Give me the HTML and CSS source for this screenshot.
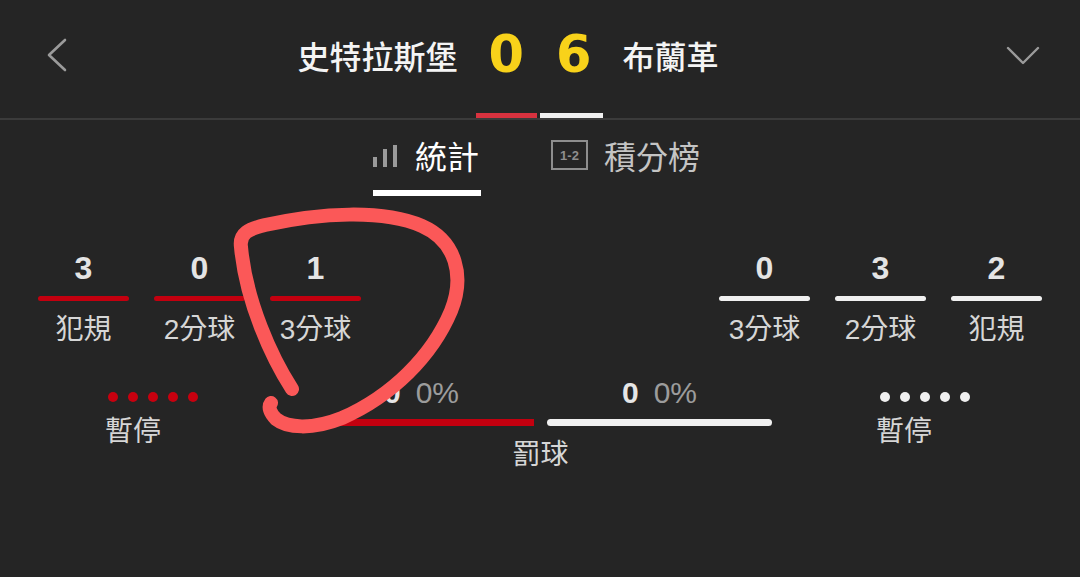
FILE: index.html
```html
<!DOCTYPE html>
<html lang="zh-Hant">
<head>
    <meta charset="UTF-8">
    <meta name="viewport" content="width=device-width, initial-scale=1.0">
    <title>史特拉斯堡 vs 布蘭革</title>
    <link rel="stylesheet" href="styles.css">
</head>
<body>
    <header>
        <div class="topbar">
            <div class="side side-left">
                <svg class="chevron" width="22" height="34" viewBox="0 0 22 34"><polyline points="19,2 3,17 19,32" fill="none" stroke="#9b9b9b" stroke-width="2.6" stroke-linecap="round" stroke-linejoin="round"/></svg>
            </div>
            <div class="match">
                <span class="team team-home">史特拉斯堡</span>
                <span class="scores"><span class="score">0</span><span class="score">6</span></span>
                <span class="team team-away">布蘭革</span>
            </div>
            <div class="side side-right">
                <svg class="chevron" width="34" height="20" viewBox="0 0 34 20"><polyline points="2,3 17,18 32,3" fill="none" stroke="#9b9b9b" stroke-width="2.4" stroke-linecap="round" stroke-linejoin="round"/></svg>
            </div>
        </div>
        <div class="pager">
            <span class="pager-home"></span>
            <span class="pager-away"></span>
        </div>
    </header>

    <nav class="tabs">
        <div class="tab active">
            <div class="tab-row">
                <svg width="26" height="24" viewBox="0 0 26 24"><rect x="0" y="14" width="4" height="10" fill="#9a9a9a"/><rect x="10" y="6" width="4" height="18" fill="#9a9a9a"/><rect x="20" y="2" width="4" height="22" fill="#9a9a9a"/></svg>
                <span>統計</span>
            </div>
            <div class="tab-line"></div>
        </div>
        <div class="tab">
            <div class="tab-row">
                <span class="box-icon">1-2</span>
                <span>積分榜</span>
            </div>
        </div>
    </nav>

    <section class="stats">
        <div class="stat-group">
            <div class="stat home"><b>3</b><i></i><span>犯規</span></div>
            <div class="stat home"><b>0</b><i></i><span>2分球</span></div>
            <div class="stat home"><b>1</b><i></i><span>3分球</span></div>
        </div>
        <div class="stat-group">
            <div class="stat away"><b>0</b><i></i><span>3分球</span></div>
            <div class="stat away"><b>3</b><i></i><span>2分球</span></div>
            <div class="stat away"><b>2</b><i></i><span>犯規</span></div>
        </div>
    </section>

    <section class="bottom">
        <div class="timeout home">
            <div class="dots"><i></i><i></i><i></i><i></i><i></i></div>
            <span>暫停</span>
        </div>
        <div class="freethrow">
            <div class="ft-sides">
                <div class="ft-side home">
                    <div class="ft-num"><b>0</b><em>0%</em></div>
                    <i></i>
                </div>
                <div class="ft-side away">
                    <div class="ft-num"><b>0</b><em>0%</em></div>
                    <i></i>
                </div>
            </div>
            <span>罰球</span>
        </div>
        <div class="timeout away">
            <div class="dots"><i></i><i></i><i></i><i></i><i></i></div>
            <span>暫停</span>
        </div>
    </section>

    <!-- hand drawn mark on top of the screen -->
    <svg class="scribble" width="1080" height="577" viewBox="0 0 1080 577">
        <path d="M292 389 C272 358 246 302 241 247 C239 233 249 229 265 225 C320 213 382 209 422 226 C456 241 465 276 451 311 C432 356 392 396 342 418 C312 430 287 428 276 419 C270 413 268 407 271 403" fill="none" stroke="#fb5858" stroke-width="14" stroke-linecap="round" stroke-linejoin="round"/>
    </svg>
</body>
</html>
```

FILE: styles.css
```css
body {
    margin: 0;
    width: 1080px;
    height: 577px;
    overflow: hidden;
    background: #252525;
    color: #e6e6e6;
    font-family: "Liberation Sans", "Noto Sans CJK TC", sans-serif;
    position: relative;
}
header {
    border-bottom: 2px solid #3b3b3b;
}
.topbar {
    display: flex;
    align-items: center;
    height: 113px;
    padding-bottom: 4px;
    box-sizing: border-box;
}
.side {
    width: 100px;
    display: flex;
}
.side-left { padding-left: 46px; box-sizing: border-box; }
.side-right { justify-content: flex-end; padding-right: 40px; box-sizing: border-box; }
.match {
    flex: 1;
    display: grid;
    grid-template-columns: 1fr auto 1fr;
    column-gap: 31px;
    align-items: center;
}
.team {
    font-family: "Noto Sans CJK TC", sans-serif;
    font-size: 32px;
    font-weight: 500;
    color: #f4f4f4;
}
.team-home { text-align: right; }
.scores {
    display: flex;
    gap: 32px;
}
.score {
    font-family: "DejaVu Sans", sans-serif;
    font-weight: bold;
    font-size: 51px;
    line-height: 56px;
    color: #f8d21a;
}
.pager {
    display: flex;
    justify-content: center;
    gap: 3px;
    height: 5px;
    margin-left: -2px;
}
.pager-home { width: 61px; background: #d8323f; }
.pager-away { width: 63px; background: #f0f0f0; }

.tabs {
    display: flex;
    gap: 69px;
    padding: 15px 0 0 373px;
    height: 61px;
}
.tab {
    display: flex;
    flex-direction: column;
}
.tab-row {
    display: flex;
    align-items: center;
    gap: 16px;
    height: 40px;
    font-family: "Noto Sans CJK TC", sans-serif;
    font-size: 32px;
    color: #c4c4c4;
}
.tab.active .tab-row { color: #ffffff; }
.tab-line {
    margin-top: 15px;
    width: 108px;
    height: 6px;
    background: #ffffff;
}
.box-icon {
    width: 37px;
    height: 30px;
    margin-left: 1px;
    border: 2px solid #8e8e8e;
    box-sizing: border-box;
    display: flex;
    align-items: center;
    justify-content: center;
    font-family: "Liberation Sans", sans-serif;
    font-size: 13px;
    font-weight: bold;
    color: #8e8e8e;
}

.stats {
    display: flex;
    justify-content: space-between;
    padding: 0 38px;
    margin-top: 54px;
}
.stat-group {
    display: flex;
    gap: 25px;
}
.stat {
    width: 91px;
    display: flex;
    flex-direction: column;
    align-items: center;
}
.stat b {
    font-size: 32px;
    line-height: 36px;
    color: #e4e4e4;
}
.stat i {
    width: 100%;
    height: 5px;
    border-radius: 3px;
    margin-top: 10px;
}
.stat.home i { background: #c3000f; }
.stat.away i { background: #f0f0f0; }
.stat span {
    margin-top: 11px;
    font-size: 28px;
    line-height: 36px;
    color: #d6d6d6;
}

.bottom {
    display: flex;
    align-items: flex-start;
    padding-left: 105px;
    margin-top: 28px;
}
.timeout {
    display: flex;
    flex-direction: column;
    font-family: "Noto Sans CJK TC", sans-serif;
    font-size: 28px;
    line-height: 36px;
    color: #d6d6d6;
    margin-top: 16px;
}
.timeout.home { width: 204px; }
.timeout.away { padding-left: 104px; }
.dots {
    display: flex;
    gap: 10px;
    padding-left: 3px;
    margin-bottom: 9px;
}
.dots i {
    width: 10px;
    height: 10px;
    border-radius: 50%;
}
.timeout.home .dots i { background: #c8000f; }
.timeout.away .dots i { background: #efefef; }
.timeout.away .dots { padding-left: 4px; }

.freethrow {
    width: 463px;
    display: flex;
    flex-direction: column;
    align-items: center;
}
.ft-sides {
    display: flex;
    gap: 13px;
}
.ft-side {
    width: 225px;
    display: flex;
    flex-direction: column;
    align-items: center;
}
.ft-num {
    display: flex;
    gap: 15px;
    font-size: 30px;
    line-height: 34px;
}
.ft-num b { color: #e6e6e6; }
.ft-num em { font-style: normal; color: #9c9c9c; }
.ft-side i {
    width: 100%;
    height: 7px;
    border-radius: 4px;
    margin-top: 9px;
}
.ft-side.home i { background: #c3000f; border-radius: 0; }
.ft-side.away i { background: #f0f0f0; }
.freethrow span {
    margin-top: 8px;
    font-family: "Noto Sans CJK TC", sans-serif;
    font-size: 28px;
    line-height: 36px;
    color: #d6d6d6;
}

.scribble {
    position: absolute;
    top: 0;
    left: 0;
    pointer-events: none;
}
```
